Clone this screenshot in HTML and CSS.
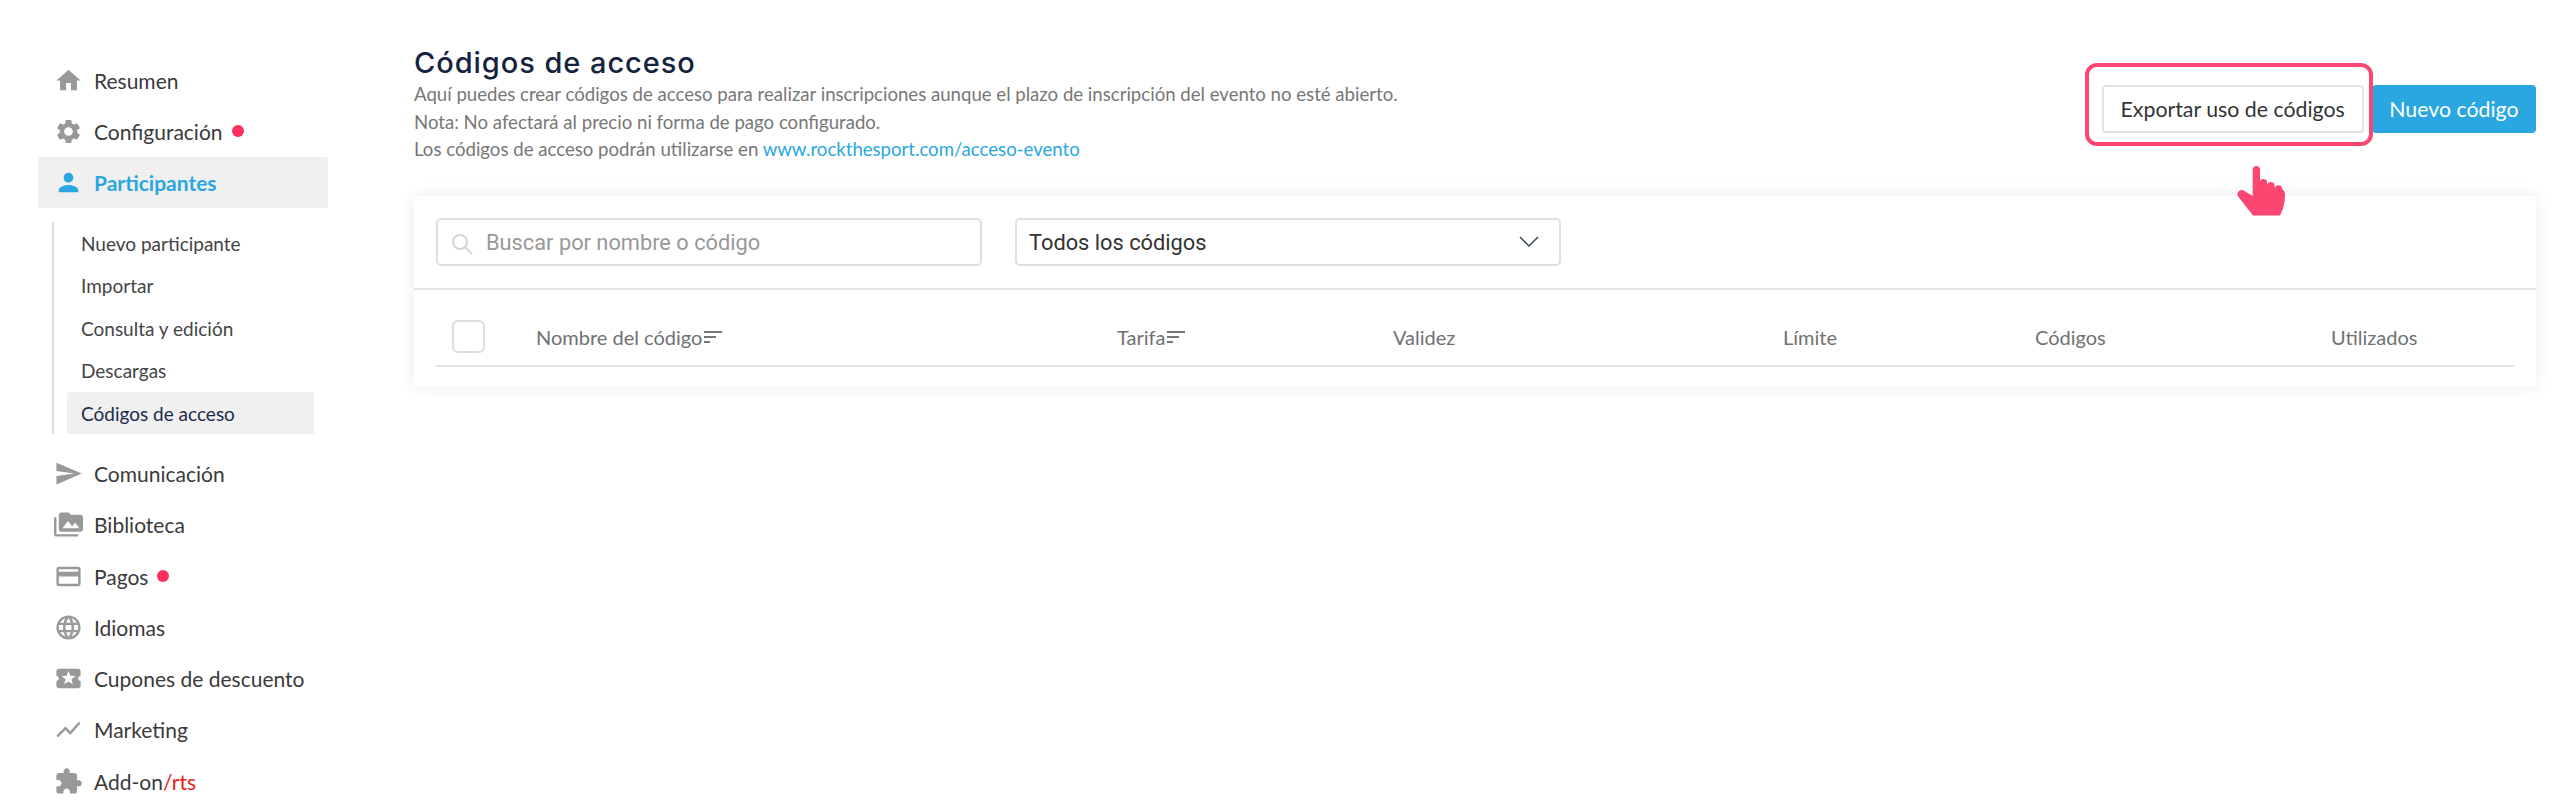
FILE: index.html
```html
<!DOCTYPE html>
<html lang="es">
<head>
    <meta charset="UTF-8">
    <title>Códigos de acceso</title>
    <link rel="stylesheet" href="styles.css">
</head>
<body>

<!-- Menu lateral -->
<aside class="sidebar">
    <a class="nav-item">
        <svg class="nav-icon" viewBox="0 0 24 24"><path d="M10 20v-6h4v6h5v-8h3L12 3 2 12h3v8z"/></svg>
        Resumen
    </a>
    <a class="nav-item">
        <svg class="nav-icon" viewBox="0 0 24 24"><path d="M19.14 12.94c.04-.3.06-.61.06-.94 0-.32-.02-.64-.07-.94l2.03-1.58a.49.49 0 0 0 .12-.61l-1.92-3.32a.488.488 0 0 0-.59-.22l-2.39.96c-.5-.38-1.03-.7-1.62-.94l-.36-2.54a.484.484 0 0 0-.48-.41h-3.84c-.24 0-.43.17-.47.41l-.36 2.54c-.59.24-1.13.57-1.62.94l-2.39-.96c-.22-.08-.47 0-.59.22L2.74 8.87c-.12.21-.08.47.12.61l2.03 1.58c-.05.3-.09.63-.09.94s.02.64.07.94l-2.03 1.58a.49.49 0 0 0-.12.61l1.92 3.32c.12.22.37.29.59.22l2.39-.96c.5.38 1.03.7 1.62.94l.36 2.54c.05.24.24.41.48.41h3.84c.24 0 .44-.17.47-.41l.36-2.54c.59-.24 1.13-.56 1.62-.94l2.39.96c.22.08.47 0 .59-.22l1.92-3.32c.12-.22.07-.47-.12-.61l-2.01-1.58zM12 15.6c-1.98 0-3.6-1.62-3.6-3.6s1.62-3.6 3.6-3.6 3.6 1.62 3.6 3.6-1.62 3.6-3.6 3.6z"/></svg>
        Configuración <span class="dot"></span>
    </a>
    <a class="nav-item active">
        <svg class="nav-icon" viewBox="0 0 24 24"><path d="M12 12c2.21 0 4-1.79 4-4s-1.79-4-4-4-4 1.79-4 4 1.79 4 4 4zm0 2c-2.67 0-8 1.34-8 4v2h16v-2c0-2.66-5.33-4-8-4z"/></svg>
        Participantes
    </a>

    <div class="subnav">
        <a class="subnav-item">Nuevo participante</a>
        <a class="subnav-item">Importar</a>
        <a class="subnav-item">Consulta y edición</a>
        <a class="subnav-item">Descargas</a>
        <a class="subnav-item current">Códigos de acceso</a>
    </div>

    <a class="nav-item">
        <svg class="nav-icon" viewBox="0 0 24 24"><path d="M2.01 21L23 12 2.01 3 2 10l15 2-15 2z"/></svg>
        Comunicación
    </a>
    <a class="nav-item">
        <svg class="nav-icon" viewBox="0 0 24 24"><path d="M2 6H0v5h.01L0 20c0 1.1.9 2 2 2h18v-2H2V6zm20-2h-8l-2-2H6c-1.1 0-1.99.9-1.99 2L4 16c0 1.1.9 2 2 2h16c1.1 0 2-.9 2-2V6c0-1.1-.9-2-2-2zM7 15l4.5-6 3.5 4.51 2.5-3.01L21 15H7z"/></svg>
        Biblioteca
    </a>
    <a class="nav-item">
        <svg class="nav-icon" viewBox="0 0 24 24"><path d="M20 4H4c-1.11 0-1.99.89-1.99 2L2 18c0 1.11.89 2 2 2h16c1.11 0 2-.89 2-2V6c0-1.11-.89-2-2-2zm0 14H4v-6h16v6zm0-10H4V6h16v2z"/></svg>
        Pagos <span class="dot"></span>
    </a>
    <a class="nav-item">
        <svg class="nav-icon" viewBox="0 0 24 24"><path d="M11.99 2C6.47 2 2 6.48 2 12s4.47 10 9.99 10C17.52 22 22 17.52 22 12S17.52 2 11.99 2zm6.93 6h-2.95c-.32-1.25-.78-2.45-1.38-3.56 1.84.63 3.37 1.91 4.33 3.56zM12 4.04c.83 1.2 1.48 2.53 1.91 3.96h-3.82c.43-1.43 1.08-2.76 1.91-3.96zM4.26 14C4.1 13.36 4 12.69 4 12s.1-1.36.26-2h3.38c-.08.66-.14 1.32-.14 2 0 .68.06 1.34.14 2H4.26zm.82 2h2.95c.32 1.25.78 2.45 1.38 3.56-1.84-.63-3.37-1.9-4.33-3.56zm2.95-8H5.08c.96-1.66 2.49-2.93 4.33-3.56C8.81 5.55 8.35 6.75 8.03 8zM12 19.96c-.83-1.2-1.48-2.53-1.91-3.96h3.82c-.43 1.43-1.08 2.76-1.91 3.96zM14.34 14H9.66c-.09-.66-.16-1.32-.16-2 0-.68.07-1.35.16-2h4.68c.09.65.16 1.32.16 2 0 .68-.07 1.34-.16 2zm.25 5.56c.6-1.11 1.06-2.31 1.38-3.56h2.95c-.96 1.65-2.49 2.93-4.33 3.56zM16.36 14c.08-.66.14-1.32.14-2 0-.68-.06-1.34-.14-2h3.38c.16.64.26 1.31.26 2s-.1 1.36-.26 2h-3.38z"/></svg>
        Idiomas
    </a>
    <a class="nav-item">
        <svg class="nav-icon" viewBox="0 0 24 24"><path d="M20 12c0-1.1.9-2 2-2V6c0-1.1-.9-2-2-2H4c-1.1 0-1.99.9-1.99 2v4c1.1 0 1.99.9 1.99 2s-.89 2-2 2v4c0 1.1.9 2 2 2h16c1.1 0 2-.9 2-2v-4c-1.1 0-2-.9-2-2zm-4.42 4.8L12 14.5l-3.58 2.3 1.08-4.12-3.29-2.69 4.24-.25L12 5.8l1.54 3.95 4.24.25-3.29 2.69 1.09 4.11z"/></svg>
        Cupones de descuento
    </a>
    <a class="nav-item">
        <svg class="nav-icon" viewBox="0 0 24 24"><path d="M3.5 18.49l6-6.01 4 4L22 6.92l-1.41-1.41-7.09 7.97-4-4L2 16.99z"/></svg>
        Marketing
    </a>
    <a class="nav-item">
        <svg class="nav-icon" viewBox="0 0 24 24"><path d="M20.5 11H19V7c0-1.1-.9-2-2-2h-4V3.5C13 2.12 11.88 1 10.5 1S8 2.12 8 3.5V5H4c-1.1 0-1.99.9-1.99 2v3.8H3.5c1.49 0 2.7 1.21 2.7 2.7s-1.21 2.7-2.7 2.7H2V20c0 1.1.9 2 2 2h3.8v-1.5c0-1.49 1.21-2.7 2.7-2.7 1.49 0 2.7 1.21 2.7 2.7V22H17c1.1 0 2-.9 2-2v-4h1.5c1.38 0 2.5-1.12 2.5-2.5S21.88 11 20.5 11z"/></svg>
        <span>Add-on<span class="red">/rts</span></span>
    </a>
</aside>

<main class="content">
    <div class="page-head">
        <div>
            <h1>Códigos de acceso</h1>
            <p>Aquí puedes crear códigos de acceso para realizar inscripciones aunque el plazo de inscripción del evento no esté abierto.</p>
            <p>Nota: No afectará al precio ni forma de pago configurado.</p>
            <p>Los códigos de acceso podrán utilizarse en <a class="link">www.rockthesport.com/acceso-evento</a></p>
        </div>
        <div class="actions">
            <div class="export-wrap">
                <button class="button">Exportar uso de códigos</button>
                <!-- Anotacion encima del boton -->
                <span class="highlight"></span>
                <svg class="hand" viewBox="0 0 48 51"><path d="M15.7 31V4A3.7 3.7 0 0 1 23 4V17A3.4 3.4 0 0 1 30 18L30.5 20A3.3 3.3 0 0 1 37.5 21.5L38 23.5A3.4 3.4 0 0 1 45 24C47 25 48 27 48 30C48 38 46 45 43 50.5H16L1.5 32C0 30 0 28 2 26C3.5 24.5 6 24.5 7.5 26Z"/></svg>
            </div>
            <button class="button primary">Nuevo código</button>
        </div>
    </div>

    <section class="card">
        <div class="toolbar">
            <div class="field">
                <svg class="search-icon" viewBox="0 0 22 22"><circle cx="9" cy="9" r="7"/><path d="M14 14l7 7"/></svg>
                <span class="placeholder">Buscar por nombre o código</span>
            </div>
            <div class="field select">
                <span>Todos los códigos</span>
                <svg class="chevron" viewBox="0 0 20 12"><path d="M1 1l9 9 9-9"/></svg>
            </div>
        </div>

        <div class="table-head">
            <div><span class="checkbox"></span></div>
            <div class="th">Nombre del código <span class="sort"><i></i><i></i><i></i></span></div>
            <div class="th">Tarifa <span class="sort"><i></i><i></i><i></i></span></div>
            <div class="th">Validez</div>
            <div class="th">Límite</div>
            <div class="th">Códigos</div>
            <div class="th">Utilizados</div>
        </div>
    </section>
</main>

</body>
</html>
```

FILE: styles.css
```css
* {
    margin: 0;
    padding: 0;
    box-sizing: border-box;
}
body {
    font-family: 'Lato', sans-serif;
    background: #fff;
    color: #333;
    display: flex;
    height: 806px;
    overflow: hidden;
}

/* Menu lateral */
.sidebar {
    width: 414px;
    flex-shrink: 0;
    padding: 54.5px 86px 0 38px;
}
.nav-item {
    display: flex;
    align-items: center;
    height: 51.3px;
    padding-left: 16px;
    font-size: 21px;
    color: #3a3a3a;
    border-radius: 2px;
}
.nav-icon {
    width: 29px;
    height: 29px;
    margin-right: 11px;
    fill: #999;
    flex-shrink: 0;
}
.nav-item.active {
    background: #f0f0f0;
    color: #2aa7e0;
    font-weight: bold;
}
.nav-item.active .nav-icon {
    fill: #2aa7e0;
}
.dot {
    display: inline-block;
    width: 12px;
    height: 12px;
    margin-left: 9px;
    background: #fb2e5c;
    border-radius: 50%;
}
.red {
    color: #f01818;
}
.subnav {
    margin: 14px 0 13.5px 14px;
    border-left: 2px solid #ddd;
}
.subnav-item {
    display: flex;
    align-items: center;
    height: 42.4px;
    width: 247px;
    margin-left: 13px;
    padding-left: 14px;
    font-size: 19px;
    color: #444;
    border-radius: 2px;
}
.subnav-item.current {
    background: #f0f0f0;
    color: #1c2b4a;
}

/* Contenido */
.content {
    flex: 1;
    padding: 45px 24px 0 0;
}
.page-head {
    display: flex;
    justify-content: space-between;
    height: 151px;
}
h1 {
    font-family: 'Inter', sans-serif;
    font-size: 29px;
    font-weight: 500;
    letter-spacing: 0.95px;
    line-height: 36px;
    color: #14233f;
}
.page-head p {
    font-size: 18.6px;
    line-height: 27.7px;
    color: #777;
}
.link {
    color: #2aa7e0;
}
.actions {
    display: flex;
    gap: 8px;
    padding-top: 40px;
}
.export-wrap {
    position: relative;
    height: 48px;
}
.button {
    height: 48px;
    padding: 0 17px;
    font-family: 'Lato', sans-serif;
    font-size: 21.3px;
    color: #333;
    background: #fff;
    border: 2px solid #e2e2e2;
    border-radius: 4px;
}
.button.primary {
    padding: 0 15.5px;
    color: #fff;
    background: #2aa7e0;
    border-color: #2aa7e0;
}
.highlight {
    position: absolute;
    top: -22px;
    left: -17px;
    right: -9px;
    bottom: -13px;
    border: 4px solid #fc4672;
    border-radius: 12px;
}
.hand {
    position: absolute;
    top: 80px;
    left: 135px;
    width: 48px;
    height: 51px;
    fill: #fc4672;
    z-index: 2;
}

/* Tarjeta */
.card {
    height: 191px;
    background: #fff;
    box-shadow: 0 0 16px rgba(0, 0, 0, 0.08);
}
.toolbar {
    display: flex;
    gap: 33px;
    height: 94px;
    padding: 22px 22px 0;
    border-bottom: 2px solid #e2e2e2;
}
.field {
    display: flex;
    align-items: center;
    width: 546px;
    height: 48px;
    padding-left: 13px;
    font-family: 'Roboto', sans-serif;
    font-size: 21.8px;
    border: 2px solid #e0e0e0;
    border-radius: 5px;
}
.select {
    justify-content: space-between;
    padding: 0 20px 0 12px;
    color: #333;
}
.placeholder {
    color: #999;
}
.search-icon {
    width: 22px;
    height: 22px;
    margin: 4px 13px 0 0;
    fill: none;
    stroke: #d4d4d4;
    stroke-width: 2;
}
.chevron {
    width: 20px;
    height: 12px;
    fill: none;
    stroke: #3c4658;
    stroke-width: 1.5;
}
.table-head {
    display: grid;
    grid-template-columns: 100px 581px 276px 390px 252px 296px 1fr;
    align-items: center;
    height: 77px;
    margin: 0 22px;
    padding-top: 18px;
    border-bottom: 2px solid #e2e2e2;
}
.checkbox {
    display: block;
    width: 33px;
    height: 33px;
    margin-left: 16px;
    border: 2px solid #ddd;
    border-radius: 6px;
}
.th {
    display: flex;
    align-items: center;
    font-size: 20px;
    color: #6f7274;
}
.sort {
    display: flex;
    flex-direction: column;
    gap: 3px;
    width: 18px;
    margin-left: 2px;
}
.sort i {
    display: block;
    height: 2px;
    background: #777;
}
.sort i:nth-child(2) {
    width: 12px;
}
.sort i:nth-child(3) {
    width: 6px;
}
```
